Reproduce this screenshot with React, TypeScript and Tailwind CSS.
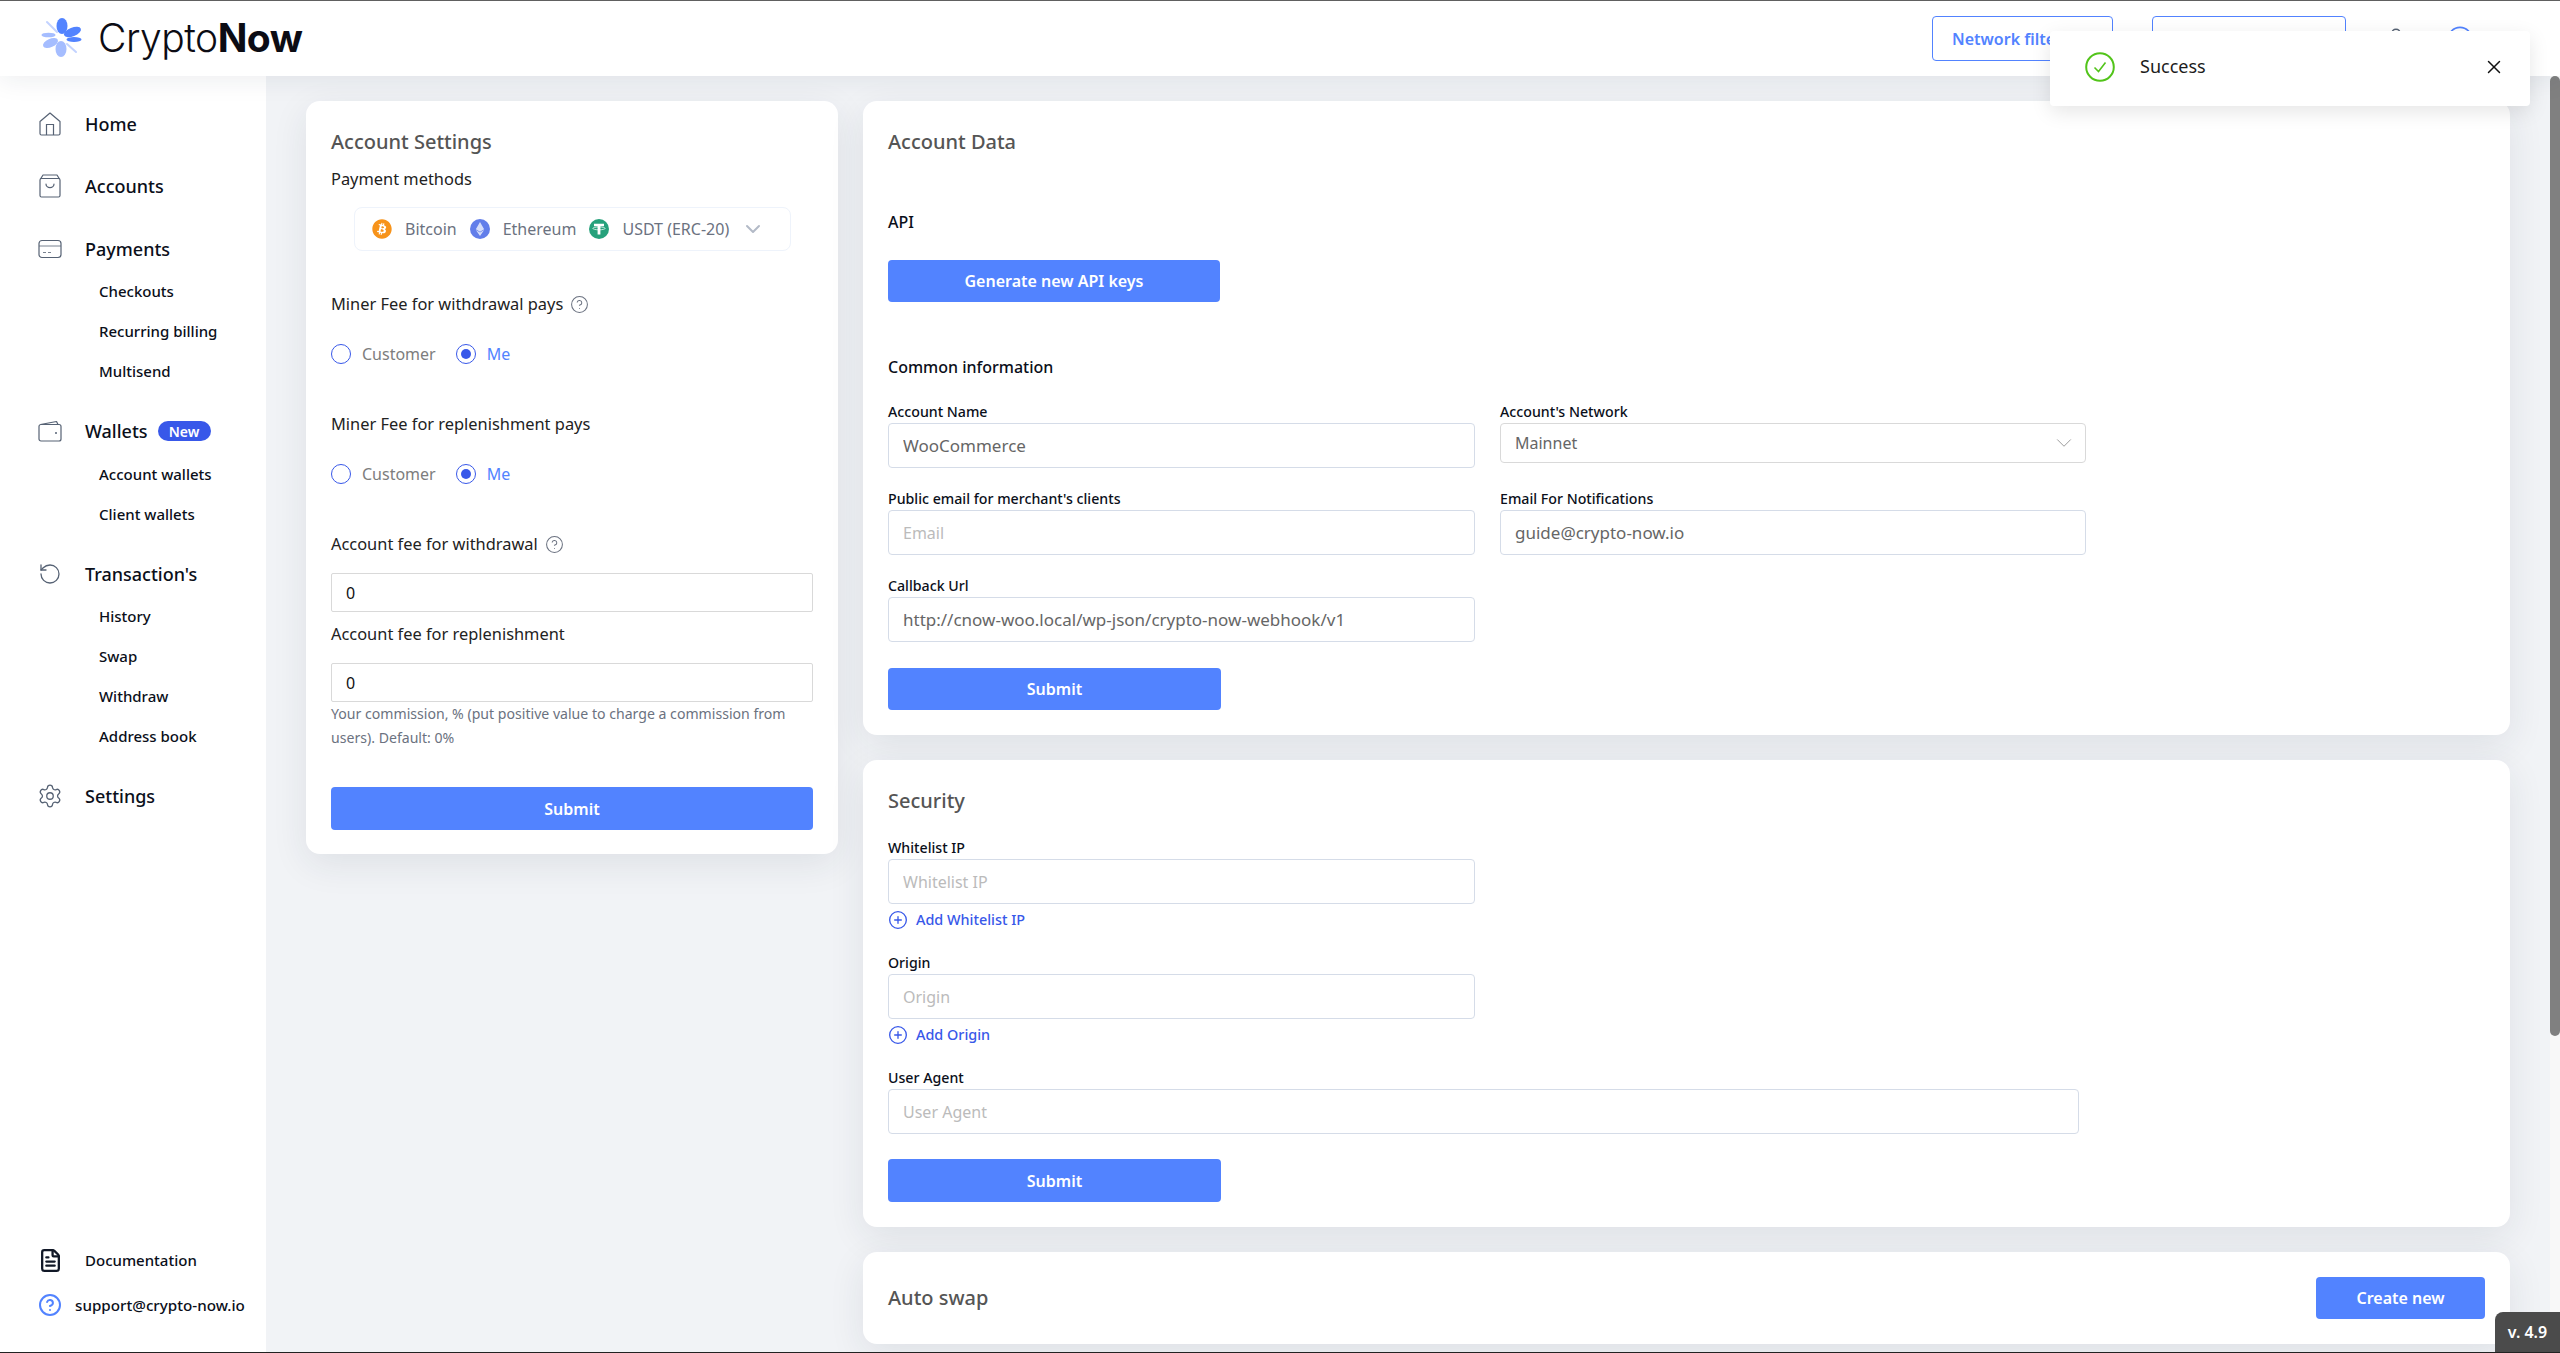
import { Settings, RotateCcw, FileText, CircleHelp, ChevronDown, X, CirclePlus, User } from "lucide-react";
import { FaBitcoin, FaEthereum } from "react-icons/fa";

const cardShadow = "shadow-[0_10px_36px_rgba(30,40,70,0.09)]";

function Logo() {
  return (
    <svg width="44" height="44" viewBox="0 0 44 44" className="shrink-0">
      <ellipse cx="22" cy="9" rx="5.5" ry="8" fill="#5283ff" />
      <ellipse cx="32.5" cy="15" rx="9" ry="4.3" fill="#5283ff" transform="rotate(-22 32.5 15)" />
      <ellipse cx="34" cy="22.5" rx="7.5" ry="2.4" fill="#5283ff" />
      <ellipse cx="21" cy="32" rx="5.5" ry="8" fill="#a5bdff" />
      <ellipse cx="10.5" cy="26" rx="8" ry="4.2" fill="#a5bdff" transform="rotate(-24 10.5 26)" />
      <ellipse cx="8.5" cy="18" rx="7" ry="2.3" fill="#a5bdff" />
      <line x1="7" y1="5" x2="17" y2="15" stroke="#c3d3ff" strokeWidth="2" strokeLinecap="round" />
      <line x1="27" y1="27" x2="36" y2="35" stroke="#c3d3ff" strokeWidth="2" strokeLinecap="round" />
    </svg>
  );
}

function HomeIcon() {
  return (
    <svg width="22" height="24" viewBox="0 0 22 24" fill="none" stroke="#566274" strokeWidth="1.2">
      <path d="M11 1 L21 9.5 V21.5 a1.5 1.5 0 0 1 -1.5 1.5 H2.5 A1.5 1.5 0 0 1 1 21.5 V9.5 Z" strokeLinejoin="round" />
      <path d="M7.5 23 V12.5 H14.5 V23" />
    </svg>
  );
}

function BagIcon() {
  return (
    <svg width="22" height="24" viewBox="0 0 22 24" fill="none" stroke="#566274" strokeWidth="1.2">
      <rect x="1" y="4.5" width="20" height="18.5" rx="1.5" />
      <path d="M1.5 5 L4 1 H18 L20.5 5" strokeLinejoin="round" />
      <path d="M7 10 a4 3.6 0 0 0 8 0" strokeLinecap="round" />
    </svg>
  );
}

function CardIcon() {
  return (
    <svg width="24" height="20" viewBox="0 0 24 20" fill="none" stroke="#566274" strokeWidth="1.2">
      <rect x="1" y="1.5" width="22" height="17" rx="3" />
      <path d="M1 7 H23" strokeWidth="0.8" />
      <path d="M5 13.5 H8 M10 13.5 H13" strokeWidth="0.8" />
    </svg>
  );
}

function WalletIcon() {
  return (
    <svg width="24" height="22" viewBox="0 0 24 22" fill="none" stroke="#566274" strokeWidth="1.2">
      <rect x="1" y="4.5" width="22" height="16.5" rx="2" />
      <path d="M2.5 4.5 L18.5 1.5 L20 4.5" strokeLinejoin="round" />
      <circle cx="18" cy="13" r="1" fill="#566274" stroke="none" />
    </svg>
  );
}

function TetherCoin() {
  return (
    <svg width="20" height="20" viewBox="0 0 20 20" className="shrink-0">
      <circle cx="10" cy="10" r="10" fill="#26a17b" />
      <path d="M5 4.8 H15 V7.2 H11.4 V15.6 H8.6 V7.2 H5 Z" fill="#fff" />
      <ellipse cx="10" cy="9.4" rx="6.2" ry="1.4" fill="none" stroke="#fff" strokeWidth="0.7" />
    </svg>
  );
}

function NavHead({ icon, label, badge }: { icon: React.ReactNode; label: string; badge?: boolean }) {
  return (
    <div className="flex h-[40px] items-center">
      <div className="ml-[32px] mr-[17px] flex w-[36px] justify-center">{icon}</div>
      <span className="text-[18px] font-medium text-[#0b0f1a]">{label}</span>
      {badge && (
        <span className="ml-[10px] flex h-[20px] w-[53px] items-center justify-center rounded-full bg-[#3858e9] text-[14px] font-semibold text-white">
          New
        </span>
      )}
    </div>
  );
}

function NavSub({ label }: { label: string }) {
  return <div className="flex h-[40px] items-center pl-[99px] text-[15px] font-medium text-[#0b0f1a]">{label}</div>;
}

function Sidebar() {
  return (
    <aside className="flex w-[266px] shrink-0 flex-col bg-white pt-[28px] pb-[35px]">
      <NavHead icon={<HomeIcon />} label="Home" />
      <div className="mt-[22px]">
        <NavHead icon={<BagIcon />} label="Accounts" />
      </div>
      <div className="mt-[23px]">
        <NavHead icon={<CardIcon />} label="Payments" />
        <div className="pt-[2px]">
          <NavSub label="Checkouts" />
          <NavSub label="Recurring billing" />
          <NavSub label="Multisend" />
        </div>
      </div>
      <div className="mt-[20px]">
        <NavHead icon={<WalletIcon />} label="Wallets" badge />
        <div className="pt-[3px]">
          <NavSub label="Account wallets" />
          <NavSub label="Client wallets" />
        </div>
      </div>
      <div className="mt-[20px]">
        <NavHead icon={<RotateCcw size={24} strokeWidth={1.3} color="#566274" />} label="Transaction's" />
        <div className="pt-[2px]">
          <NavSub label="History" />
          <NavSub label="Swap" />
          <NavSub label="Withdraw" />
          <NavSub label="Address book" />
        </div>
      </div>
      <div className="mt-[20px]">
        <NavHead icon={<Settings size={26} strokeWidth={1.2} color="#566274" />} label="Settings" />
      </div>
      <div className="mt-auto flex flex-col gap-[21px]">
        <div className="flex h-[24px] items-center pl-[38px]">
          <FileText size={25} strokeWidth={2.2} color="#111827" />
          <span className="ml-[22px] text-[15px] font-medium text-[#0b0f1a]">Documentation</span>
        </div>
        <div className="flex h-[24px] items-center pl-[38px]">
          <CircleHelp size={24} strokeWidth={2} color="#5283ff" />
          <span className="ml-[13px] text-[15.2px] font-medium text-[#0b0f1a]">support@crypto-now.io</span>
        </div>
      </div>
    </aside>
  );
}

function Header() {
  return (
    <header className="relative z-10 flex h-[75px] shrink-0 items-center bg-white pl-[40px] shadow-[0_4px_24px_rgba(30,40,70,0.08)]">
      <Logo />
      <div className="ml-[14px] font-['Inter',sans-serif] text-[39px] tracking-[-0.5px] text-[#0c0c14]">
        <span className="font-light">Crypto</span>
        <span className="font-bold">Now</span>
      </div>
      <div className="ml-auto flex items-center pr-[86px]">
        <button className="flex h-[45px] w-[181px] items-center rounded-[4px] border border-[#5283ff] pl-[19px] text-[16px] font-semibold text-[#5283ff]">
          Network filter
        </button>
        <div className="ml-[39px] h-[45px] w-[194px] rounded-[4px] border border-[#5283ff]" />
        <User size={26} strokeWidth={1.4} color="#566274" className="ml-[37px]" />
        <CircleHelp size={28} strokeWidth={1.5} color="#5283ff" className="ml-[37px]" />
      </div>
    </header>
  );
}

function Toast() {
  return (
    <div className="absolute top-[30px] left-[2050px] z-20 flex h-[75px] w-[480px] items-center rounded-[4px] bg-white pr-[25px] pb-[4px] pl-[35px] shadow-[0_6px_20px_rgba(0,0,0,0.1)]">
      <svg width="30" height="30" viewBox="0 0 30 30" fill="none" stroke="#52c41a" strokeWidth="2">
        <circle cx="15" cy="15" r="13.8" />
        <path d="M9.5 15.5 L13.5 19.5 L20.5 10.5" strokeWidth="1.6" />
      </svg>
      <span className="ml-[25px] text-[18px] text-[#1c1c1c]">Success</span>
      <X size={22} strokeWidth={1.6} color="#111" className="ml-auto" />
    </div>
  );
}

function PrimaryButton({ label, className }: { label: string; className: string }) {
  return (
    <button className={`flex items-center justify-center rounded-[4px] bg-[#5283ff] text-[16px] font-semibold text-white ${className}`}>
      {label}
    </button>
  );
}

function Radio({ label, checked }: { label: string; checked?: boolean }) {
  return (
    <div className="flex items-center">
      <span className="flex h-[20px] w-[20px] items-center justify-center rounded-full border-[1.5px] border-[#3858e9]">
        {checked && <span className="h-[10px] w-[10px] rounded-full bg-[#3858e9]" />}
      </span>
      <span className={`ml-[11px] text-[16px] ${checked ? "text-[#5283ff]" : "text-[#7d7d7d]"}`}>{label}</span>
    </div>
  );
}

function RadioRow() {
  return (
    <div className="mt-[26px] flex h-[24px] items-center gap-[20px]">
      <Radio label="Customer" />
      <Radio label="Me" checked />
    </div>
  );
}

function AccountSettings() {
  const fieldLabel = "flex h-[24px] items-center text-[16.4px] text-[#222]";
  const numberInput =
    "mt-[17px] block h-[39px] w-full rounded-[2px] border border-[#d9d9d9] pl-[14px] text-[16px] text-[#111] outline-none";
  return (
    <section className={`w-[532px] shrink-0 self-start rounded-[14px] bg-white px-[25px] pt-[25px] pb-[24px] ${cardShadow}`}>
      <h2 className="flex h-[32px] items-center text-[20px] font-medium text-[#555]">Account Settings</h2>
      <div className={`mt-[9px] ${fieldLabel}`}>Payment methods</div>
      <div className="mt-[16px] ml-[23px] flex h-[44px] w-[437px] items-center rounded-[8px] border border-[#eef3fb] pl-[17px] text-[16px] text-[#6b7280]">
        <FaBitcoin size={20} color="#f7931a" className="shrink-0" />
        <span className="ml-[13px]">Bitcoin</span>
        <span className="ml-[13px] flex h-[20px] w-[20px] shrink-0 items-center justify-center rounded-full bg-[#627eea]">
          <FaEthereum size={14} color="#d5ddfa" />
        </span>
        <span className="ml-[13px]">Ethereum</span>
        <span className="ml-[13px]">
          <TetherCoin />
        </span>
        <span className="ml-[13px]">USDT (ERC-20)</span>
        <ChevronDown size={24} strokeWidth={2} color="#b3bac7" className="ml-[12px]" />
      </div>
      <div className={`mt-[41px] ${fieldLabel}`}>
        Miner Fee for withdrawal pays
        <CircleHelp size={19} strokeWidth={1.3} color="#6b7280" className="ml-[7px]" />
      </div>
      <RadioRow />
      <div className={`mt-[46px] ${fieldLabel}`}>Miner Fee for replenishment pays</div>
      <RadioRow />
      <div className={`mt-[46px] ${fieldLabel}`}>
        Account fee for withdrawal
        <CircleHelp size={19} strokeWidth={1.3} color="#6b7280" className="ml-[7px]" />
      </div>
      <input readOnly value="0" className={numberInput} />
      <div className={`mt-[10px] ${fieldLabel}`}>Account fee for replenishment</div>
      <input readOnly value="0" className={numberInput} />
      <p className="text-[14.1px] leading-[24px] text-[#6b7280]">
        Your commission, % (put positive value to charge a commission from users). Default: 0%
      </p>
      <PrimaryButton label="Submit" className="mt-[37px] h-[43px] w-full" />
    </section>
  );
}

function Field({
  label,
  value,
  placeholder,
  inputClass = "w-[587px]",
}: {
  label: string;
  value?: string;
  placeholder?: string;
  inputClass?: string;
}) {
  return (
    <div>
      <label className="block h-[20px] text-[14.2px] leading-[20px] font-medium text-[#0b0f1a]">{label}</label>
      <input
        readOnly
        value={value}
        placeholder={placeholder}
        className={`mt-[1px] block h-[45px] rounded-[4px] border border-[#d5dce8] pl-[14px] text-[#666] outline-none placeholder:text-[#bbb] ${
          value ? "text-[17px]" : "text-[16px]"
        } ${inputClass}`}
      />
    </div>
  );
}

function AccountData() {
  return (
    <section className={`rounded-[14px] bg-white px-[25px] pt-[25px] pb-[25px] ${cardShadow}`}>
      <h2 className="flex h-[32px] items-center text-[20px] font-medium text-[#555]">Account Data</h2>
      <h3 className="mt-[52px] flex h-[24px] items-center text-[16px] font-medium text-[#0b0f1a]">API</h3>
      <PrimaryButton label="Generate new API keys" className="mt-[26px] h-[42px] w-[332px]" />
      <h3 className="mt-[53px] flex h-[24px] items-center text-[16px] font-medium text-[#0b0f1a]">Common information</h3>
      <div className="mt-[23px] grid grid-cols-[587px_586px] gap-x-[25px] gap-y-[21px]">
        <Field label="Account Name" value="WooCommerce" />
        <div>
          <label className="block h-[20px] text-[14.2px] leading-[20px] font-medium text-[#0b0f1a]">Account's Network</label>
          <div className="mt-[1px] flex h-[40px] items-center justify-between rounded-[4px] border border-[#d9d9d9] pr-[8px] pl-[14px] text-[16px] text-[#666]">
            Mainnet
            <ChevronDown size={26} strokeWidth={0.9} color="#999" />
          </div>
        </div>
        <Field label="Public email for merchant's clients" placeholder="Email" />
        <Field label="Email For Notifications" value="guide@crypto-now.io" inputClass="w-[586px]" />
        <Field label="Callback Url" value="http://cnow-woo.local/wp-json/crypto-now-webhook/v1" />
      </div>
      <PrimaryButton label="Submit" className="mt-[26px] h-[42px] w-[333px]" />
    </section>
  );
}

function AddLink({ label }: { label: string }) {
  return (
    <div className="mt-[6px] flex h-[20px] items-center text-[14.4px] font-medium text-[#3858e9]">
      <CirclePlus size={20} strokeWidth={1.6} />
      <span className="ml-[8px]">{label}</span>
    </div>
  );
}

function Security() {
  return (
    <section className={`rounded-[14px] bg-white px-[25px] pt-[25px] pb-[25px] ${cardShadow}`}>
      <h2 className="flex h-[32px] items-center text-[20px] font-medium text-[#555]">Security</h2>
      <div className="mt-[21px]">
        <Field label="Whitelist IP" placeholder="Whitelist IP" />
      </div>
      <AddLink label="Add Whitelist IP" />
      <div className="mt-[23px]">
        <Field label="Origin" placeholder="Origin" />
      </div>
      <AddLink label="Add Origin" />
      <div className="mt-[23px]">
        <Field label="User Agent" placeholder="User Agent" inputClass="w-[1191px]" />
      </div>
      <PrimaryButton label="Submit" className="mt-[25px] h-[43px] w-[333px]" />
    </section>
  );
}

function AutoSwap() {
  return (
    <section className={`flex h-[92px] items-center justify-between rounded-[14px] bg-white px-[25px] ${cardShadow}`}>
      <h2 className="text-[20px] font-medium text-[#555]">Auto swap</h2>
      <PrimaryButton label="Create new" className="h-[42px] w-[169px]" />
    </section>
  );
}

export default function App() {
  return (
    <div className="relative flex h-screen w-full flex-col overflow-hidden border-t border-b border-t-[#606060] border-b-[#222] bg-[#f1f3f6] font-['Noto_Sans',sans-serif]">
      <Header />
      <Toast />
      <div className="flex min-h-0 flex-1">
        <Sidebar />
        <main className="flex min-w-0 flex-1 items-start gap-[25px] overflow-hidden py-[25px] pl-[40px] pr-[40px]">
          <AccountSettings />
          <div className="flex min-w-0 flex-1 flex-col gap-[25px]">
            <AccountData />
            <Security />
            <AutoSwap />
          </div>
        </main>
        <div className="w-[10px] shrink-0 bg-[#f8f8f8]">
          <div className="h-[960px] rounded-full bg-[#808080]" />
        </div>
      </div>
      <div className="absolute right-0 bottom-0 z-20 flex h-[40px] w-[65px] items-center justify-center rounded-tl-[8px] bg-[#4b4b4b] text-[16px] font-semibold text-white">
        v. 4.9
      </div>
    </div>
  );
}
